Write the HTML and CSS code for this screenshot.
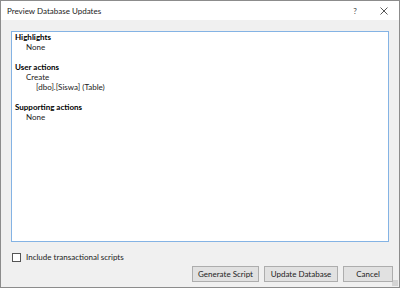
FILE: index.html
```html
<!DOCTYPE html>
<html>
<head>
    <title>Preview Database Updates</title>
    <link rel="stylesheet" href="styles.css">
</head>
<body>
    <div class="window">
        <div class="title-bar">
            <span class="title">Preview Database Updates</span>
            <span class="title-btn help">?</span>
            <span class="title-btn close">
                <svg width="8" height="8" viewBox="0 0 8 8">
                    <path d="M0.5 0.5 L7.5 7.5 M7.5 0.5 L0.5 7.5" stroke="#444" stroke-width="0.9"/>
                </svg>
            </span>
        </div>

        <div class="content">
            <div class="report">
                <div class="section">
                    <div class="heading">Highlights</div>
                    <div class="item">None</div>
                </div>
                <div class="section">
                    <div class="heading">User actions</div>
                    <div class="item">Create</div>
                    <div class="sub-item">[dbo].[Siswa] (Table)</div>
                </div>
                <div class="section">
                    <div class="heading">Supporting actions</div>
                    <div class="item">None</div>
                </div>
            </div>

            <label class="option">
                <span class="checkbox"></span>
                Include transactional scripts
            </label>

            <div class="buttons">
                <button class="btn btn-generate">Generate Script</button>
                <button class="btn btn-update">Update Database</button>
                <button class="btn">Cancel</button>
            </div>
        </div>
        <div class="grip"></div>
    </div>
</body>
</html>
```

FILE: styles.css
```css
body {
    margin: 0;
    font-family: Lato, "Noto Sans", sans-serif;
    font-size: 8px;
    color: #000;
}

.window {
    position: relative;
    width: 400px;
    height: 288px;
    box-sizing: border-box;
    border: 1px solid #8c8c8c;
    background-color: #f0f0f0;
    display: flex;
    flex-direction: column;
}

.title-bar {
    height: 19px;
    flex-shrink: 0;
    background-color: #fff;
    display: flex;
    align-items: center;
    padding-left: 6px;
}

.title {
    flex: 1;
    color: #1a1a1a;
}

.title-btn {
    width: 12px;
    display: flex;
    justify-content: center;
    color: #444;
}

.help {
    margin-right: 17px;
}

.close {
    margin-right: 9px;
}

.content {
    flex: 1;
    padding: 11px 10px 5px 10px;
    display: flex;
    flex-direction: column;
}

.report {
    height: 211px;
    box-sizing: border-box;
    background-color: #fff;
    border: 1px solid #84b3e4;
    padding: 0 3px;
}

.section {
    margin-bottom: 10px;
}

.heading {
    font-weight: bold;
    line-height: 10px;
}

.item {
    padding-left: 11px;
    line-height: 10px;
    color: #222;
}

.sub-item {
    padding-left: 21px;
    line-height: 10px;
    color: #222;
}

.option {
    display: flex;
    align-items: center;
    margin-top: 10px;
    margin-left: 1px;
    color: #222;
}

.checkbox {
    width: 7px;
    height: 7px;
    border: 1px solid #555;
    background-color: #fff;
    margin-right: 5px;
}

.buttons {
    display: flex;
    justify-content: flex-end;
    gap: 5px;
    margin-top: auto;
    margin-right: -4px;
}

.btn {
    height: 16px;
    width: 50px;
    padding: 0;
    font-family: inherit;
    font-size: 8px;
    color: #222;
    background-color: #e1e1e1;
    border: 1px solid #adadad;
}

.btn-generate {
    width: 67px;
}

.btn-update {
    width: 74px;
}

.grip {
    position: absolute;
    right: 1px;
    bottom: 1px;
    width: 6px;
    height: 6px;
    background-image: radial-gradient(#b4b4b4 0.6px, transparent 0.8px);
    background-size: 2px 2px;
}
```
